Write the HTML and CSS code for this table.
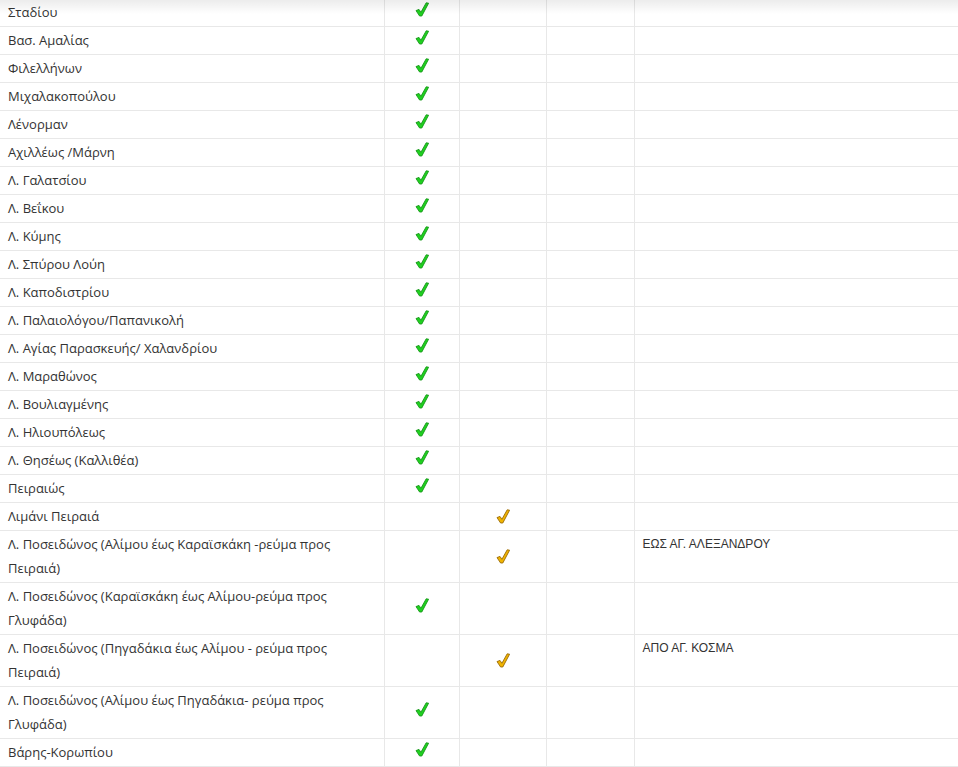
FILE: index.html
```html
<!DOCTYPE html>
<html lang="el">
<head>
<meta charset="utf-8">
<title>Δρόμοι</title>
<link rel="stylesheet" href="styles.css">
</head>
<body>
<div class="shade"></div>
<svg width="0" height="0" class="defs">
  <defs>
    <symbol id="chk" viewBox="0 0 14 15">
      <path d="M1 8.6 L4 7.4 L5.9 10.3 L11.2 0.8 L13.6 1.2 L6.8 14 L4.6 14 Z"/>
    </symbol>
  </defs>
</svg>
<table class="grid">
  <colgroup>
    <col class="c1"><col class="c2"><col class="c3"><col class="c4"><col class="c5">
  </colgroup>
  <tbody id="rows"></tbody>
</table>
<script>
const G='g',Y='y';
const data=[
['Σταδίου',G],['Βασ. Αμαλίας',G],['Φιλελλήνων',G],['Μιχαλακοπούλου',G],['Λένορμαν',G],
['Αχιλλέως /Μάρνη',G],['Λ. Γαλατσίου',G],['Λ. Βεΐκου',G],['Λ. Κύμης',G],['Λ. Σπύρου Λούη',G],
['Λ. Καποδιστρίου',G],['Λ. Παλαιολόγου/Παπανικολή',G],['Λ. Αγίας Παρασκευής/ Χαλανδρίου',G],
['Λ. Μαραθώνος',G],['Λ. Βουλιαγμένης',G],['Λ. Ηλιουπόλεως',G],['Λ. Θησέως (Καλλιθέα)',G],['Πειραιώς',G],
['Λιμάνι Πειραιά',Y],
['Λ. Ποσειδώνος (Αλίμου έως Καραϊσκάκη -ρεύμα προς Πειραιά)',Y,'ΕΩΣ ΑΓ. ΑΛΕΞΑΝΔΡΟΥ'],
['Λ. Ποσειδώνος (Καραϊσκάκη έως Αλίμου-ρεύμα προς Γλυφάδα)',G],
['Λ. Ποσειδώνος (Πηγαδάκια έως Αλίμου - ρεύμα προς Πειραιά)',Y,'ΑΠΟ ΑΓ. ΚΟΣΜΑ'],
['Λ. Ποσειδώνος (Αλίμου έως Πηγαδάκια- ρεύμα προς Γλυφάδα)',G],
['Βάρης-Κορωπίου',G]
];
const icon=c=>'<svg class="chk '+c+'" width="14" height="15"><use href="#chk"/></svg>';
document.getElementById('rows').innerHTML=data.map(r=>
'<tr><td class="name">'+r[0]+'</td><td class="mark">'+(r[1]===G?icon('green'):'')+'</td><td class="mark">'+(r[1]===Y?icon('gold'):'')+'</td><td></td><td class="note">'+(r[2]||'')+'</td></tr>'
).join('');
</script>
</body>
</html>
```
FILE: styles.css
```css
html, body {
  margin: 0;
  padding: 0;
  background: #fff;
}
body {
  font-family: "Open Sans", "Noto Sans", sans-serif;
  color: #333;
  font-size: 13px;
  overflow: hidden;
}
.defs {
  position: absolute;
}
.shade {
  position: absolute;
  left: 0;
  top: 0;
  width: 958px;
  height: 14px;
  background: linear-gradient(rgba(0,0,0,0.075), rgba(0,0,0,0));
  pointer-events: none;
  z-index: 2;
}
.grid {
  width: 958px;
  border-collapse: collapse;
  table-layout: fixed;
  margin-top: -1px;
}
.c1 { width: 384px; }
.c2 { width: 75px; }
.c3 { width: 87px; }
.c4 { width: 88px; }
.c5 { width: 324px; }
.grid td {
  border-bottom: 1px solid #e8e8e8;
  border-left: 1px solid #e8e8e8;
  padding: 1px 8px 2px;
  line-height: 24px;
  vertical-align: middle;
}
.grid td:first-child {
  border-left: none;
}
.grid td.name {
  padding-right: 40px;
}
.grid td.mark {
  text-align: center;
  padding: 0;
}
.grid td.note {
  vertical-align: top;
  font-family: "Liberation Sans", sans-serif;
  font-size: 12px;
}
.chk {
  display: inline-block;
  vertical-align: middle;
  stroke-width: 0.9;
  stroke-linejoin: round;
}
.chk.green {
  fill: #1fd21f;
  stroke: #17961a;
  margin-top: -6px;
  transform: translateY(-2px);
}
.chk.gold {
  fill: #f0b400;
  stroke: #9a6a08;
  margin-top: -3px;
}
```
